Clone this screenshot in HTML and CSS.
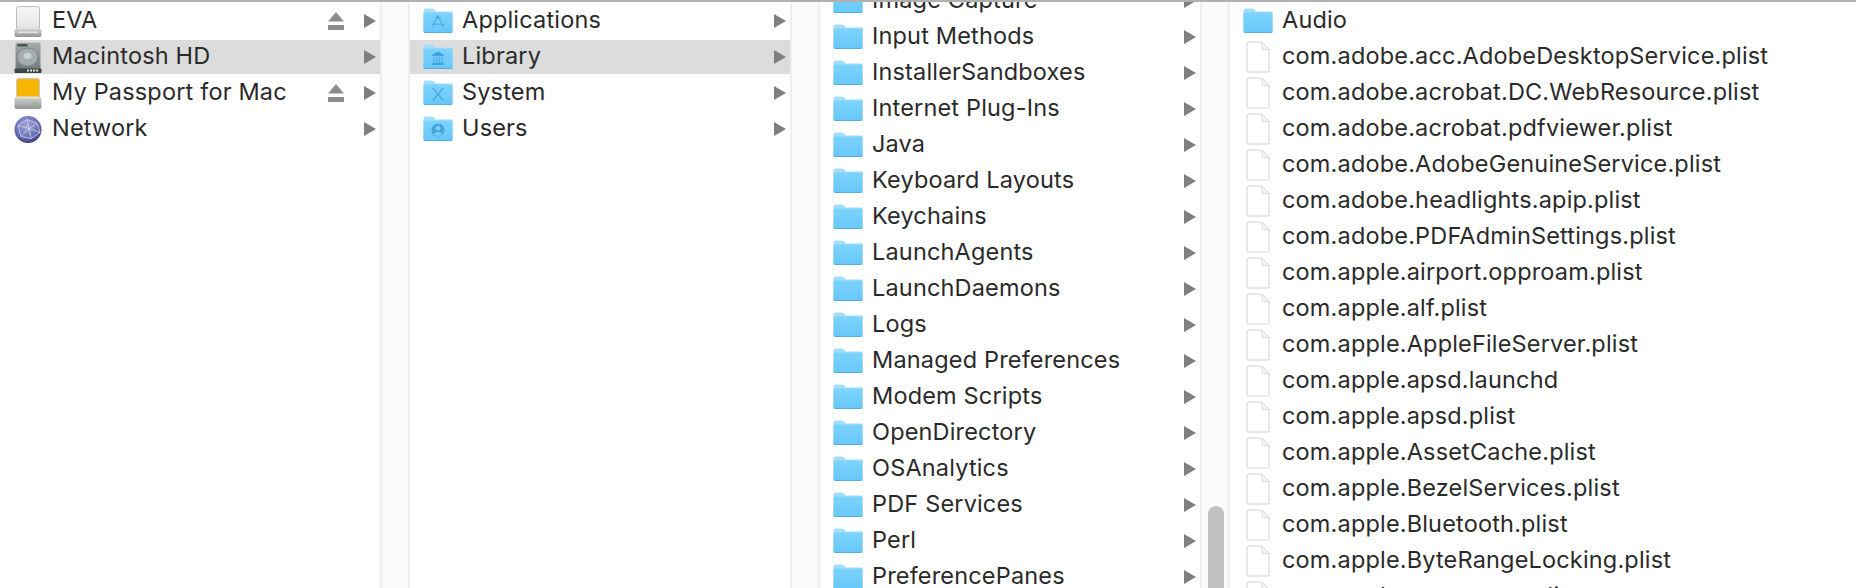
FILE: index.html
```html
<!DOCTYPE html>
<html lang="en">
<head>
    <meta charset="UTF-8">
    <title>Finder</title>
    <link rel="stylesheet" href="styles.css">
</head>
<body>
    <!-- shared icons -->
    <svg class="defs" width="0" height="0">
        <defs>
            <linearGradient id="folderBody" x1="0" y1="0" x2="0" y2="1">
                <stop offset="0" stop-color="#7dd3fd"/>
                <stop offset="1" stop-color="#68c8fb"/>
            </linearGradient>
            <linearGradient id="driveBody" x1="0" y1="0" x2="0" y2="1">
                <stop offset="0" stop-color="#f6f6f6"/>
                <stop offset="1" stop-color="#e2e2e2"/>
            </linearGradient>
            <linearGradient id="driveBase" x1="0" y1="0" x2="0" y2="1">
                <stop offset="0" stop-color="#d2d2d2"/>
                <stop offset="1" stop-color="#959595"/>
            </linearGradient>
            <linearGradient id="hdBody" x1="0" y1="0" x2="0" y2="1">
                <stop offset="0" stop-color="#a5adad"/>
                <stop offset="1" stop-color="#6f7878"/>
            </linearGradient>
            <radialGradient id="globe" cx="0.45" cy="0.35" r="0.72">
                <stop offset="0" stop-color="#a4a9dc"/>
                <stop offset="0.6" stop-color="#6a6fb4"/>
                <stop offset="1" stop-color="#2f3272"/>
            </radialGradient>
            <symbol id="folder" viewBox="0 0 30 25">
                <path d="M0.500 3.500 Q0.500 0.500 3 0.500 H9 Q10.500 0.500 11.500 2 L12.500 3.500 H29.500 V23 Q29.500 24.500 28 24.500 H2 Q0.500 24.500 0.500 23 Z" fill="#a2ddfb"/>
                <path d="M0.500 5.500 Q0.500 4.500 2 4.500 H28 Q29.500 4.500 29.500 5.500 V23 Q29.500 24 28 24 H2 Q0.500 24 0.500 23 Z" fill="url(#folderBody)"/>
                <path d="M0.500 23.500 Q0.500 24.500 2 24.500 H28 Q29.500 24.500 29.500 23.500" fill="none" stroke="#57aede" stroke-width="1"/>
            </symbol>
            <symbol id="file" viewBox="0 0 24 32">
                <path d="M1 2 Q1 1 2 1 H16 L23 8.500 V30 Q23 31 22 31 H2 Q1 31 1 30 Z" fill="#fff" stroke="#d2d2d2" stroke-width="1"/>
                <path d="M16 1 V8.500 H23 Z" fill="#f6f6f6" stroke="#dcdcdc" stroke-width="1"/>
            </symbol>
            <symbol id="arrow" viewBox="0 0 12 14">
                <path d="M0 0 L12 7 L0 14 Z" fill="#7f7f7f"/>
            </symbol>
            <symbol id="eject" viewBox="0 0 16 18">
                <path d="M8 0 L16 9.500 H0 Z M0 13 H16 V18 H0 Z" fill="#8c8c8c"/>
            </symbol>
        </defs>
    </svg>

    <div class="top-line"></div>
    <div class="browser">

        <div class="column first">
            <div class="row">
                <svg class="icon" viewBox="0 0 28 31">
                    <rect x="2.500" y="0.500" width="23" height="24" rx="2" fill="url(#driveBody)" stroke="#bdbdbd"/>
                    <rect x="0.500" y="23" width="27" height="8" rx="2" fill="url(#driveBase)"/>
                    <rect x="4" y="25.500" width="20" height="1.500" fill="#e4e4e4"/>
                </svg>
                <span class="label">EVA</span>
                <svg class="eject"><use href="#eject"/></svg>
                <svg class="arrow"><use href="#arrow"/></svg>
            </div>
            <div class="row selected">
                <svg class="icon" viewBox="0 0 28 31">
                    <rect x="1.500" y="0.500" width="25" height="28" rx="1.500" fill="url(#hdBody)"/>
                    <rect x="3.500" y="2" width="10" height="2.500" fill="#4b5252"/>
                    <ellipse cx="13.500" cy="15" rx="10.500" ry="9" fill="#a3adad" stroke="#7c8585"/>
                    <ellipse cx="13.500" cy="14" rx="4" ry="3" fill="#c9d0d0"/>
                    <rect x="0.500" y="26.500" width="27" height="4.500" rx="1" fill="#3f4545"/>
                    <path d="M13 28.500 H25" stroke="#d8dcdc" stroke-width="2" stroke-dasharray="2 1"/>
                </svg>
                <span class="label">Macintosh HD</span>
                <svg class="arrow"><use href="#arrow"/></svg>
            </div>
            <div class="row">
                <svg class="icon" viewBox="0 0 28 31">
                    <rect x="2.500" y="0.500" width="23" height="20" rx="2" fill="#f7b500" stroke="#c9c9c9"/>
                    <rect x="0.500" y="19" width="27" height="12" rx="2" fill="url(#driveBase)"/>
                    <rect x="3" y="18.500" width="22" height="2" fill="#e2e2e2"/>
                    <rect x="19" y="25" width="4" height="2" fill="#7fc46a"/>
                </svg>
                <span class="label">My Passport for Mac</span>
                <svg class="eject"><use href="#eject"/></svg>
                <svg class="arrow"><use href="#arrow"/></svg>
            </div>
            <div class="row">
                <svg class="icon" viewBox="0 0 28 28">
                    <circle cx="14" cy="14" r="13.500" fill="url(#globe)"/>
                    <path d="M4 10 L13 4 L23 8 L26 17 L17 23 L7 21 Z M13 4 L15 13 L7 21 M15 13 L23 8 M15 13 L17 23 M4 10 L15 13 L26 17" fill="none" stroke="#e3e5f5" stroke-width="0.700"/>
                </svg>
                <span class="label">Network</span>
                <svg class="arrow"><use href="#arrow"/></svg>
            </div>
        </div>
        <div class="gutter"></div>

        <div class="column second">
            <div class="row">
                <span class="folder-wrap">
                    <svg class="folder"><use href="#folder"/></svg>
                    <svg class="badge" viewBox="0 0 16 16"><path d="M8 0.500 L2 14 M8 0.500 L14 14 M0.500 10.500 H15.500 M5 3 L11 3" fill="none" stroke="#45a6e0" stroke-width="1.100"/></svg>
                </span>
                <span class="label">Applications</span>
                <svg class="arrow"><use href="#arrow"/></svg>
            </div>
            <div class="row selected">
                <span class="folder-wrap">
                    <svg class="folder"><use href="#folder"/></svg>
                    <svg class="badge" viewBox="0 0 16 16"><path d="M8 1 L15 5 H1 Z M2 14 H14 V15.500 H2 Z M3.500 6.500 V13 M6.500 6.500 V13 M9.500 6.500 V13 M12.500 6.500 V13" fill="#3f9ed8" stroke="#3f9ed8" stroke-width="1"/></svg>
                </span>
                <span class="label">Library</span>
                <svg class="arrow"><use href="#arrow"/></svg>
            </div>
            <div class="row">
                <span class="folder-wrap">
                    <svg class="folder"><use href="#folder"/></svg>
                    <svg class="badge" viewBox="0 0 16 16"><path d="M2 1 L14 15.500 M14 1 L2 15.500" fill="none" stroke="#45a6e0" stroke-width="1.500"/></svg>
                </span>
                <span class="label">System</span>
                <svg class="arrow"><use href="#arrow"/></svg>
            </div>
            <div class="row">
                <span class="folder-wrap">
                    <svg class="folder"><use href="#folder"/></svg>
                    <svg class="badge" viewBox="0 0 16 16"><circle cx="8" cy="8" r="7.500" fill="#45a6e0"/><circle cx="8" cy="6" r="2.600" fill="#7fd0f8"/><path d="M3 13 Q8 7.500 13 13 Q8 16 3 13 Z" fill="#7fd0f8"/></svg>
                </span>
                <span class="label">Users</span>
                <svg class="arrow"><use href="#arrow"/></svg>
            </div>
        </div>
        <div class="gutter"></div>

        <div class="column third">
            <div class="row"><svg class="folder"><use href="#folder"/></svg><span class="label">Image Capture</span><svg class="arrow"><use href="#arrow"/></svg></div>
            <div class="row"><svg class="folder"><use href="#folder"/></svg><span class="label">Input Methods</span><svg class="arrow"><use href="#arrow"/></svg></div>
            <div class="row"><svg class="folder"><use href="#folder"/></svg><span class="label">InstallerSandboxes</span><svg class="arrow"><use href="#arrow"/></svg></div>
            <div class="row"><svg class="folder"><use href="#folder"/></svg><span class="label">Internet Plug-Ins</span><svg class="arrow"><use href="#arrow"/></svg></div>
            <div class="row"><svg class="folder"><use href="#folder"/></svg><span class="label">Java</span><svg class="arrow"><use href="#arrow"/></svg></div>
            <div class="row"><svg class="folder"><use href="#folder"/></svg><span class="label">Keyboard Layouts</span><svg class="arrow"><use href="#arrow"/></svg></div>
            <div class="row"><svg class="folder"><use href="#folder"/></svg><span class="label">Keychains</span><svg class="arrow"><use href="#arrow"/></svg></div>
            <div class="row"><svg class="folder"><use href="#folder"/></svg><span class="label">LaunchAgents</span><svg class="arrow"><use href="#arrow"/></svg></div>
            <div class="row"><svg class="folder"><use href="#folder"/></svg><span class="label">LaunchDaemons</span><svg class="arrow"><use href="#arrow"/></svg></div>
            <div class="row"><svg class="folder"><use href="#folder"/></svg><span class="label">Logs</span><svg class="arrow"><use href="#arrow"/></svg></div>
            <div class="row"><svg class="folder"><use href="#folder"/></svg><span class="label">Managed Preferences</span><svg class="arrow"><use href="#arrow"/></svg></div>
            <div class="row"><svg class="folder"><use href="#folder"/></svg><span class="label">Modem Scripts</span><svg class="arrow"><use href="#arrow"/></svg></div>
            <div class="row"><svg class="folder"><use href="#folder"/></svg><span class="label">OpenDirectory</span><svg class="arrow"><use href="#arrow"/></svg></div>
            <div class="row"><svg class="folder"><use href="#folder"/></svg><span class="label">OSAnalytics</span><svg class="arrow"><use href="#arrow"/></svg></div>
            <div class="row"><svg class="folder"><use href="#folder"/></svg><span class="label">PDF Services</span><svg class="arrow"><use href="#arrow"/></svg></div>
            <div class="row"><svg class="folder"><use href="#folder"/></svg><span class="label">Perl</span><svg class="arrow"><use href="#arrow"/></svg></div>
            <div class="row"><svg class="folder"><use href="#folder"/></svg><span class="label">PreferencePanes</span><svg class="arrow"><use href="#arrow"/></svg></div>
        </div>
        <div class="gutter scroll">
            <div class="thumb"></div>
        </div>

        <div class="column fourth">
            <div class="row"><svg class="folder"><use href="#folder"/></svg><span class="label">Audio</span></div>
            <div class="row"><svg class="file"><use href="#file"/></svg><span class="label">com.adobe.acc.AdobeDesktopService.plist</span></div>
            <div class="row"><svg class="file"><use href="#file"/></svg><span class="label">com.adobe.acrobat.DC.WebResource.plist</span></div>
            <div class="row"><svg class="file"><use href="#file"/></svg><span class="label">com.adobe.acrobat.pdfviewer.plist</span></div>
            <div class="row"><svg class="file"><use href="#file"/></svg><span class="label">com.adobe.AdobeGenuineService.plist</span></div>
            <div class="row"><svg class="file"><use href="#file"/></svg><span class="label">com.adobe.headlights.apip.plist</span></div>
            <div class="row"><svg class="file"><use href="#file"/></svg><span class="label">com.adobe.PDFAdminSettings.plist</span></div>
            <div class="row"><svg class="file"><use href="#file"/></svg><span class="label">com.apple.airport.opproam.plist</span></div>
            <div class="row"><svg class="file"><use href="#file"/></svg><span class="label">com.apple.alf.plist</span></div>
            <div class="row"><svg class="file"><use href="#file"/></svg><span class="label">com.apple.AppleFileServer.plist</span></div>
            <div class="row"><svg class="file"><use href="#file"/></svg><span class="label">com.apple.apsd.launchd</span></div>
            <div class="row"><svg class="file"><use href="#file"/></svg><span class="label">com.apple.apsd.plist</span></div>
            <div class="row"><svg class="file"><use href="#file"/></svg><span class="label">com.apple.AssetCache.plist</span></div>
            <div class="row"><svg class="file"><use href="#file"/></svg><span class="label">com.apple.BezelServices.plist</span></div>
            <div class="row"><svg class="file"><use href="#file"/></svg><span class="label">com.apple.Bluetooth.plist</span></div>
            <div class="row"><svg class="file"><use href="#file"/></svg><span class="label">com.apple.ByteRangeLocking.plist</span></div>
            <div class="row"><svg class="file"><use href="#file"/></svg><span class="label">com.apple.commerce.plist</span></div>
        </div>
    </div>
</body>
</html>
```

FILE: styles.css
```css
html, body {
    margin: 0;
    padding: 0;
    height: 588px;
    overflow: hidden;
    background: #fff;
}

body {
    font-family: 'Inter', 'Liberation Sans', sans-serif;
    font-size: 23.5px;
    letter-spacing: 0.17px;
    color: #2a2a2a;
}

.defs {
    display: block;
    height: 0;
}

.top-line {
    height: 2px;
    background: #b0b0b0;
}

.browser {
    display: flex;
    height: 586px;
    overflow: hidden;
}

.column {
    flex: none;
    display: flex;
    flex-direction: column;
    width: 380px;
    height: 586px;
    overflow: hidden;
    padding-top: 2px;
    box-sizing: border-box;
}

.third { padding-top: 0; }
.fourth { flex: 1; }

/* list is scrolled a bit, first row is cut by the top */
.third .row:first-child { margin-top: -18px; }

.gutter {
    flex: none;
    width: 26px;
    background: #fafafa;
    border-left: 2px solid #eeeeee;
    border-right: 2px solid #eeeeee;
}

.scroll {
    padding-top: 504px;
}

.thumb {
    width: 16px;
    height: 200px;
    margin-left: 6px;
    border-radius: 8px;
    background: #c2c2c2;
}

.row {
    flex: none;
    display: flex;
    align-items: center;
    height: 34px;
    margin-bottom: 2px;
    padding-left: 13px;
    padding-right: 4px;
}

.first .row { padding-left: 14px; }

.selected { background: #dcdcdc; }

.icon {
    flex: none;
    width: 28px;
    height: 31px;
}

.folder {
    flex: none;
    display: block;
    width: 30px;
    height: 25px;
    margin-bottom: 2px;
}

.file {
    flex: none;
    width: 24px;
    height: 32px;
    margin-left: 3px;
    margin-right: 3px;
    margin-bottom: 1px;
}

.folder-wrap {
    position: relative;
    flex: none;
    width: 30px;
    height: 27px;
}

.badge {
    position: absolute;
    left: 8px;
    top: 7px;
    width: 14px;
    height: 14px;
}

.label {
    flex: 1;
    margin-left: 9px;
    padding-bottom: 4px;
    white-space: nowrap;
}

.first .label { margin-left: 10px; }

.eject {
    flex: none;
    width: 16px;
    height: 18px;
    margin-right: 20px;
}

.arrow {
    flex: none;
    width: 12px;
    height: 14px;
}
```
